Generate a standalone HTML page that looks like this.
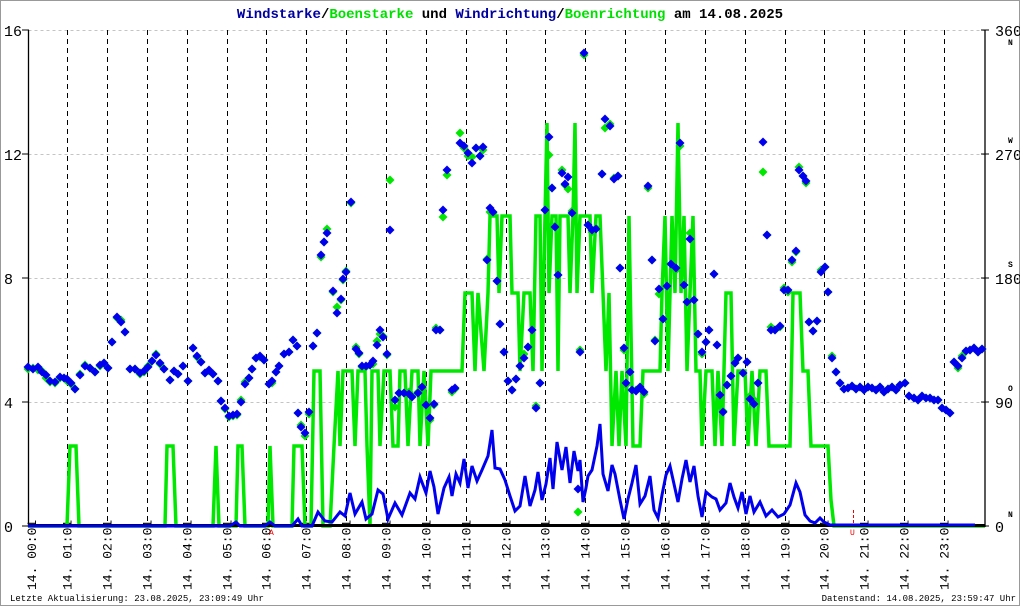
<!DOCTYPE html>
<html><head><meta charset="utf-8"><style>
html,body{margin:0;padding:0;background:#fff}
svg{display:block}
text{font-family:"Liberation Mono",monospace}
</style></head><body>
<svg id="s" width="1020" height="606" xmlns="http://www.w3.org/2000/svg">
<rect x="0.5" y="0.5" width="1019" height="605" fill="#fff" stroke="#999"/>
<text x="510" y="18" text-anchor="middle" font-size="14" font-weight="bold"><tspan fill="#0000a0">Windstarke</tspan><tspan fill="#000">/</tspan><tspan fill="#00e000">Boenstarke</tspan><tspan fill="#000"> und </tspan><tspan fill="#0000a0">Windrichtung</tspan><tspan fill="#000">/</tspan><tspan fill="#00e000">Boenrichtung</tspan><tspan fill="#000"> am 14.08.2025</tspan></text>
<g id="grid"></g>
<g id="data"></g>
<text x="10" y="601" font-size="9" fill="#000">Letzte Aktualisierung: 23.08.2025, 23:09:49 Uhr</text>
<text x="1016" y="601" font-size="9" fill="#000" text-anchor="end">Datenstand: 14.08.2025, 23:59:47 Uhr</text>
</svg>
<script>
var NS="http://www.w3.org/2000/svg";
function el(p,t,a,txt){var e=document.createElementNS(NS,t);for(var k in a)e.setAttribute(k,a[k]);if(txt!=null)e.textContent=txt;p.appendChild(e);return e;}
var g=document.getElementById('grid'),d=document.getElementById('data');
var L=28.5,R=985,T=30,B=526;
[30,154,278,402].forEach(function(y){el(g,'line',{x1:L,x2:R,y1:y+.5,y2:y+.5,stroke:'#c4c4c4','stroke-dasharray':'3,3'});});
var lab=['16','12','8','4','0'],rl=['360','270','180','90','0'],dl=['N','W','S','O','N'];
for(var i=0;i<5;i++){var y=30+i*124;
el(g,'text',{x:4,y:y+6,'font-size':'15','font-family':'Liberation Sans,sans-serif'},lab[i]);
el(g,'line',{x1:22,x2:29,y1:y,y2:y,stroke:'#000'});
el(g,'line',{x1:981,x2:989,y1:y,y2:y,stroke:'#000'});
el(g,'text',{x:995,y:y+6,'font-size':'15','font-family':'Liberation Sans,sans-serif'},rl[i]);
el(g,'text',{x:1008,y:i==0?y+15:(i==4?y-9:y-11),'font-size':'8','font-weight':'bold'},dl[i]);}
el(g,'line',{x1:L,x2:L,y1:30,y2:527,stroke:'#000','stroke-width':1.3});
el(g,'line',{x1:R,x2:R,y1:30,y2:527,stroke:'#000','stroke-width':1.3});
for(var h=1;h<24;h++){var x=Math.round(27.2+h*39.86)+.5;
el(g,'line',{x1:x,x2:x,y1:30,y2:526,stroke:'#000','stroke-dasharray':'5,4'});
var hh=(h<10?'0':'')+h;
el(g,'text',{transform:'translate('+(x+4)+',590) rotate(-90)','font-size':'13'},'14. '+hh+':01');}
el(g,'text',{transform:'translate(36,590) rotate(-90)','font-size':'13'},'14. 00:01');
el(g,'line',{x1:272.5,x2:272.5,y1:510,y2:526,stroke:'#e00','stroke-dasharray':'3,2'});
el(g,'text',{x:269,y:535,'font-size':'8',fill:'#e00'},'A');
el(g,'line',{x1:853.5,x2:853.5,y1:510,y2:526,stroke:'#e00','stroke-dasharray':'3,2'});
el(g,'text',{x:850,y:535,'font-size':'8',fill:'#e00'},'U');
var gp=[[28,526],[67,526],[70,446],[76,446],[79,526],[165,526],[167,446],[173,446],[176,526],[213,526],[216,446],[219,526],[236,526],[238,446],[242,446],[245,526],[268,526],[270,446],[273,526],[292,526],[294,446],[302,446],[305,526],[311,526],[314,371],[320,371],[323,526],[330,526],[334,446],[338,371],[340,446],[343,371],[352,371],[355,446],[358,371],[365,371],[367,446],[370,526],[372,371],[378,371],[380,446],[384,371],[390,371],[393,446],[398,446],[400,371],[405,371],[408,446],[412,371],[418,371],[420,446],[424,371],[428,446],[431,371],[462,371],[465,293],[472,293],[475,371],[478,293],[484,371],[488,293],[490,216],[497,216],[499,293],[502,216],[510,216],[512,293],[518,293],[520,371],[524,293],[530,293],[533,371],[536,216],[540,216],[542,371],[545,216],[547,123],[549,293],[552,216],[556,216],[558,371],[560,216],[568,216],[570,293],[573,216],[575,123],[577,293],[580,216],[590,216],[592,293],[596,216],[600,216],[603,293],[606,371],[609,293],[612,446],[616,371],[619,446],[622,371],[626,446],[629,216],[633,446],[640,446],[643,371],[660,371],[662,293],[665,216],[668,371],[672,216],[675,293],[678,123],[681,293],[684,216],[687,371],[690,293],[693,216],[696,371],[700,371],[702,446],[706,371],[712,371],[715,446],[718,371],[722,446],[726,293],[731,293],[734,446],[738,371],[745,371],[748,446],[752,371],[756,446],[760,371],[766,371],[769,446],[790,446],[793,293],[800,293],[803,371],[808,371],[811,446],[828,446],[831,500],[834,526],[985,526]];
el(d,'polyline',{points:gp.join(' '),fill:'none',stroke:'#00e800','stroke-width':3.5});
el(d,'line',{x1:28,x2:985,y1:525.5,y2:525.5,stroke:'#000','stroke-width':3});
var bp=[[28,526],[230,526],[236,522],[240,526],[265,526],[270,522],[275,526],[292,526],[298,519],[302,526],[312,526],[318,512],[325,521],[332,522],[340,512],[345,516],[350,493],[355,514],[362,502],[366,519],[372,514],[378,490],[383,494],[388,519],[395,503],[402,515],[410,493],[415,499],[420,477],[426,493],[430,471],[434,487],[438,514],[444,488],[449,477],[452,496],[456,474],[460,483],[464,459],[468,488],[472,466],[477,481],[482,470],[488,456],[492,430],[495,468],[500,469],[505,480],[510,496],[515,511],[520,506],[525,476],[530,506],[535,490],[538,472],[542,500],[546,484],[550,458],[553,489],[557,442],[562,470],[566,447],[570,483],[574,451],[578,471],[580,460],[583,502],[586,488],[588,476],[592,470],[597,446],[600,424],[603,474],[608,491],[612,465],[615,474],[620,500],[624,519],[628,499],[632,483],[636,465],[640,504],[645,496],[650,476],[654,510],[658,518],[662,495],[666,475],[670,466],[674,484],[678,502],[682,479],[686,460],[690,482],[694,466],[698,496],[702,517],[706,492],[712,497],[716,499],[720,510],[726,503],[730,483],[734,497],[738,508],[742,492],[746,514],[750,496],[754,512],[760,502],[766,516],[772,510],[778,517],[784,514],[790,505],[796,483],[800,492],[805,515],[810,521],[815,523],[820,518],[824,522],[830,525],[975,525]];
el(d,'polyline',{points:bp.join(' '),fill:'none',stroke:'#0000ee','stroke-width':3});
var dots=[[28,367,369],[33,369,368],[38,367,370],[42,372,371],[46,375,378],[50,381,382],[55,382,383],[60,377,378],[64,378,378],[67,379,381],[71,383,384],[75,389,389],[80,375,374],[85,366,365],[90,368,368],[95,372,372],[100,365,366],[104,363,363],[108,368,368],[112,342,342],[117,317,318],[121,322,320],[125,332,332],[130,369,369],[135,369,369],[140,373,374],[144,371,372],[148,367,366],[152,361,361],[156,355,354],[160,363,364],[164,369,369],[170,380,380],[174,371,371],[178,374,374],[183,366,366],[188,381,381],[193,348,348],[197,356,357],[201,362,362],[205,373,373],[209,370,371],[213,374,374],[218,381,381],[221,401,401],[225,408,409],[229,416,417],[233,415,416],[237,414,415],[241,402,400],[245,384,382],[249,378,378],[252,369,369],[256,358,358],[260,356,357],[264,360,360],[269,384,384],[272,381,383],[276,372,372],[279,366,366],[284,354,354],[289,352,352],[293,340,340],[297,346,346],[298,413,413],[301,427,425],[305,433,436],[309,412,414],[313,346,346],[317,333,333],[321,255,257],[324,242,242],[327,233,229],[333,291,292],[337,313,307],[341,299,300],[343,279,280],[346,272,271],[351,202,203],[356,349,347],[359,353,354],[362,366,367],[366,366,367],[370,365,365],[373,361,364],[377,345,341],[380,330,334],[383,337,336],[387,354,355],[390,230,180],[395,400,407],[399,393,393],[404,393,393],[409,394,392],[412,397,396],[418,393,392],[422,387,388],[426,405,404],[430,418,420],[434,404,405],[436,330,328],[440,330,330],[443,210,217],[447,170,175],[452,390,392],[455,388,389],[460,143,133],[464,146,148],[468,153,156],[472,163,157],[476,148,148],[480,156,156],[483,147,150],[487,260,259],[490,208,212],[493,212,213],[497,281,281],[500,324,324],[504,352,352],[508,381,381],[512,390,390],[516,379,379],[520,366,366],[524,358,354],[528,347,347],[532,330,330],[536,408,406],[540,383,383],[545,210,210],[549,137,155],[552,188,188],[555,227,226],[558,275,275],[562,173,170],[565,184,185],[568,177,189],[572,213,211],[578,489,512],[580,352,350],[584,53,55],[588,225,225],[592,230,232],[596,229,228],[602,174,174],[605,119,128],[610,126,124],[614,179,178],[618,176,176],[620,268,268],[624,348,350],[626,383,385],[630,372,372],[632,390,390],[636,391,390],[640,387,388],[644,392,394],[648,186,188],[652,260,260],[655,341,340],[659,289,294],[663,319,319],[667,286,287],[671,264,264],[676,268,270],[680,143,146],[684,285,285],[687,302,302],[690,239,233],[694,300,300],[698,334,334],[702,352,354],[706,342,342],[709,330,330],[714,274,274],[717,345,345],[720,395,400],[723,412,411],[727,385,385],[731,376,376],[735,363,363],[738,358,358],[743,373,373],[747,362,362],[750,399,396],[754,404,400],[758,383,383],[763,142,172],[767,235,235],[771,330,327],[775,330,330],[780,326,327],[784,290,288],[788,290,292],[792,260,262],[796,251,252],[799,170,167],[803,176,176],[806,181,183],[809,322,322],[813,331,331],[817,321,321],[821,272,270],[825,267,267],[828,292,292],[832,358,356],[836,372,372],[840,383,383],[844,389,389],[848,388,388],[852,386,386],[856,389,389],[860,387,387],[864,390,390],[868,387,387],[872,388,388],[876,390,390],[880,387,387],[884,392,392],[888,389,389],[892,387,387],[896,390,390],[900,385,385],[905,383,383],[909,396,396],[914,398,398],[918,400,400],[922,396,396],[926,398,398],[930,398,398],[934,400,400],[938,400,400],[942,408,408],[946,410,410],[950,413,413],[954,362,362],[958,366,368],[962,358,356],[966,351,351],[970,350,350],[974,348,348],[978,352,352],[982,349,349]];
function dia(x,y,c){el(d,'path',{d:'M'+x+' '+(y-4.5)+'L'+(x+4.5)+' '+y+'L'+x+' '+(y+4.5)+'L'+(x-4.5)+' '+y+'Z',fill:c});}
dots.forEach(function(p){dia(p[0],p[2],'#00e800');});
dots.forEach(function(p){dia(p[0],p[1],'#0000ee');});
</script>
</body></html>
